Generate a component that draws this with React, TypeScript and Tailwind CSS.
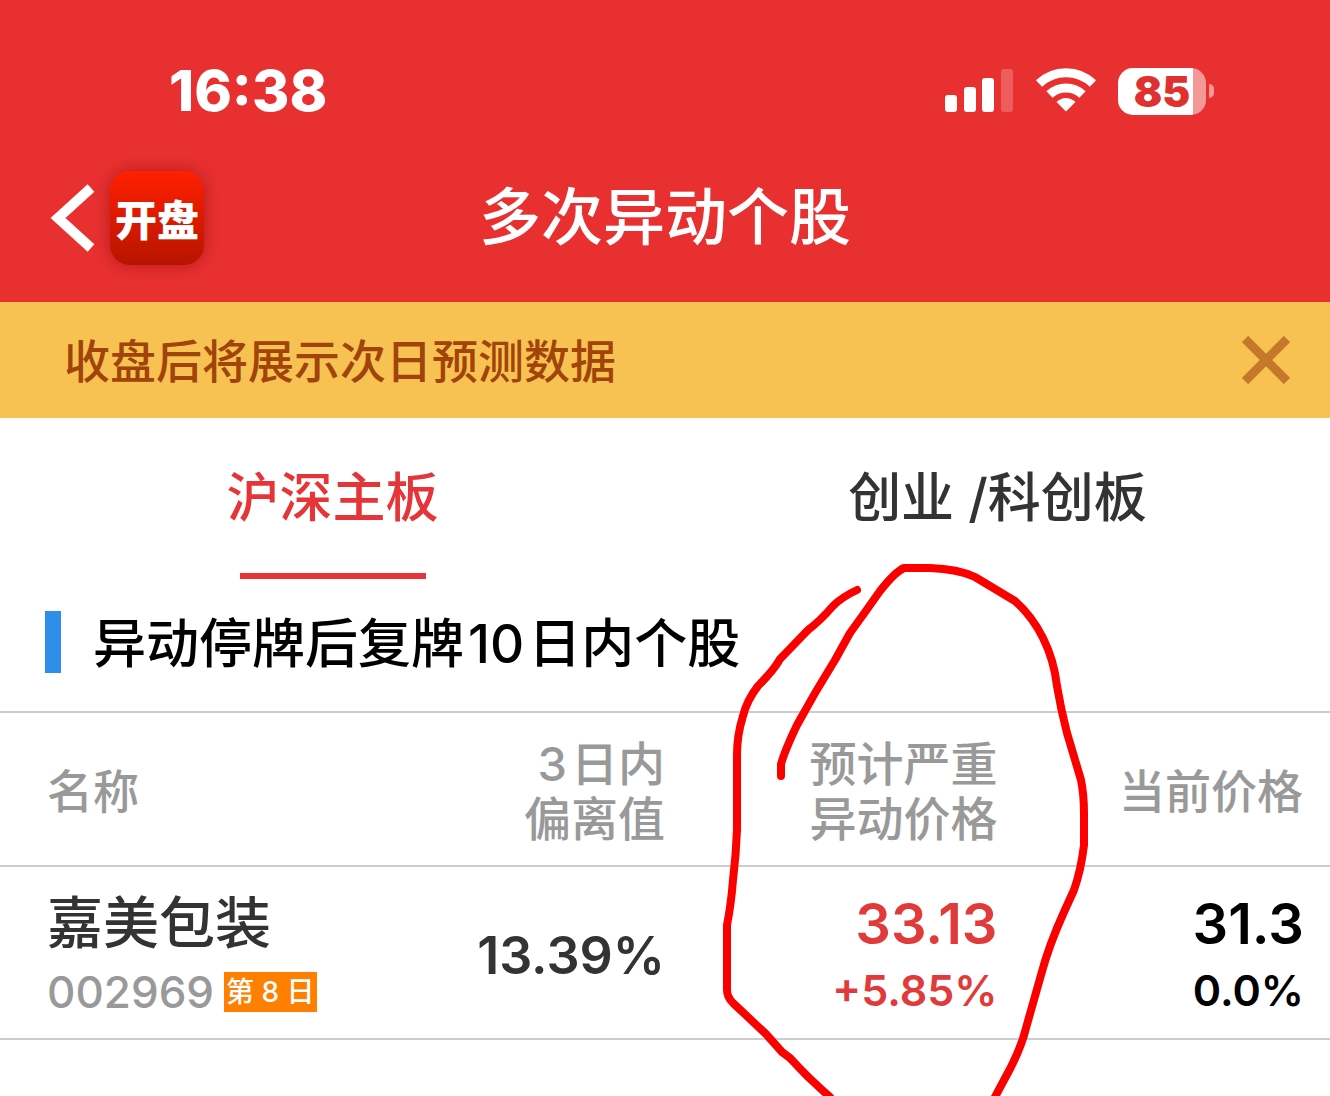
const tabs = [
  { href: '#main', label: '沪深主板', active: true },
  { href: '#growth', label: '创业 /科创板', active: false },
];

const stocks = [
  {
    name: '嘉美包装',
    code: '002969',
    day: '第 8 日',
    deviation: '13.39%',
    target: '33.13',
    targetPct: '+5.85%',
    price: '31.3',
    pricePct: '0.0%',
  },
];

const StatusBar = () => (
  <div className="flex items-center justify-between pt-[60px] pl-[169px] pr-[116px]">
    <span className="text-[57px] leading-[62px] font-extrabold">16:38</span>
    <div className="flex items-center gap-5">
      <svg width="70" height="46" viewBox="2 0 70 46" fill="currentColor" aria-hidden="true">
        <rect x="3" y="27" width="12" height="17" rx="3" />
        <rect x="22" y="19" width="12" height="25" rx="3" />
        <rect x="40" y="10" width="12" height="34" rx="3" />
        <rect x="59" y="1" width="12" height="43" rx="3" opacity="0.22" />
      </svg>
      <svg width="64" height="46" viewBox="1 0 64 46" fill="none" stroke="currentColor" aria-hidden="true">
        <path d="M6 15.5 A39 39 0 0 1 60 15.5" strokeWidth="9" />
        <path d="M16.5 26.5 A24 24 0 0 1 49.5 26.5" strokeWidth="9" />
        <path d="M33 43.5 L23.5 34 Q33 26 42.5 34 Z" fill="currentColor" stroke="none" />
      </svg>
      <div className="flex items-center gap-[3px]">
        <span className="flex h-[47px] w-[88px] items-center justify-center rounded-[15px] bg-linear-to-r from-white from-85% to-white/50 to-85% text-[42px] leading-[47px] font-black text-[#e03030]">
          85
        </span>
        <span className="h-[14px] w-[5px] rounded-r-full bg-white/50" />
      </div>
    </div>
  </div>
);

const TitleBar = () => (
  <div className="grid grid-cols-[1fr_auto_1fr] items-center px-[50px] pt-[49px]">
    <div className="flex items-center gap-[14px]">
      <button type="button" aria-label="返回">
        <svg width="46" height="68" viewBox="0 0 46 68" fill="none" stroke="currentColor" strokeWidth="10">
          <path d="M41 4 L8 34 L41 64" />
        </svg>
      </button>
      <span className="flex h-[94px] w-[94px] items-center justify-center rounded-[20px] bg-linear-to-b from-[#ff2000] to-[#b81400] pt-1 text-[42px] font-black shadow-[0_0_16px_rgba(120,0,0,0.45)]">
        开盘
      </span>
    </div>
    <h1 className="text-[62px] leading-[92px] font-medium">多次异动个股</h1>
  </div>
);

const Notice = () => (
  <div className="flex h-[116px] items-center justify-between bg-[#f7c252] pl-16 pr-10">
    <p className="pt-[2px] text-[46px] leading-[60px] font-medium text-[#a1440b]">收盘后将展示次日预测数据</p>
    <button type="button" aria-label="关闭" className="text-[#c5782a]">
      <svg width="48" height="48" viewBox="0 0 48 48" stroke="currentColor" strokeWidth="9">
        <path d="M3 3 L45 45 M45 3 L3 45" />
      </svg>
    </button>
  </div>
);

const Tabs = () => (
  <nav className="grid grid-cols-2 pt-[42px]">
    {tabs.map((tab) => (
      <a
        key={tab.href}
        href={tab.href}
        className={`flex flex-col items-center text-[53px] leading-[76px] font-medium ${
          tab.active ? 'text-[#e63538]' : 'text-[#333333]'
        }`}
      >
        {tab.label}
        {tab.active && <span className="mt-[37px] h-[6px] w-[186px] bg-[#e63538]" />}
      </a>
    ))}
  </nav>
);

const StockTable = () => (
  <table className="w-full table-fixed border-y-2 border-[#cccccc]">
    <thead>
      <tr className="h-[154px] border-b-2 border-[#cccccc] text-[46px] leading-[55px] text-[#999999]">
        <th className="pt-1 pl-[47px] text-left font-medium">名称</th>
        <th className="pt-1 text-right text-[47px] font-medium">
          <span className="mr-1">3</span>日内
          <br />
          偏离值
        </th>
        <th className="pt-1 text-right text-[47px] font-medium">
          预计严重
          <br />
          异动价格
        </th>
        <th className="pt-1 pr-[27px] text-right font-medium">当前价格</th>
      </tr>
    </thead>
    <tbody>
      {stocks.map((s) => (
        <tr key={s.code} className="h-[173px] font-semibold">
          <td className="pt-[6px] pl-[47px] text-left whitespace-nowrap">
            <div className="text-[56px] leading-[72px] font-medium text-[#333333]">{s.name}</div>
            <div className="flex items-center gap-[10px]">
              <span className="text-[44px] leading-[66px] font-medium text-[#999999]">{s.code}</span>
              <span className="bg-[#ff7f00] px-[2px] text-[28px] leading-[40px] font-medium text-white">{s.day}</span>
            </div>
          </td>
          <td className="pt-[6px] text-right text-[52px] text-[#333333]">{s.deviation}</td>
          <td className="pt-[8px] text-right text-[#e03a3a]">
            <div className="text-[56px] leading-[66px]">{s.target}</div>
            <div className="text-[43px] leading-[66px]">{s.targetPct}</div>
          </td>
          <td className="pt-[8px] pr-[26px] text-right text-black">
            <div className="text-[56px] leading-[66px]">{s.price}</div>
            <div className="text-[43px] leading-[66px]">{s.pricePct}</div>
          </td>
        </tr>
      ))}
    </tbody>
  </table>
);

// Hand-drawn red loop over the price column
const Marker = () => (
  <svg
    className="pointer-events-none absolute top-0 left-0 w-full"
    viewBox="0 0 1330 1096"
    fill="none"
    stroke="#fc0000"
    strokeWidth="8"
    strokeLinecap="round"
    strokeLinejoin="round"
    aria-hidden="true"
  >
    <path d="M857 590 Q842 597 833 606 Q820 621 808 630 L780 659 Q774 670 758 686 Q747 700 743 716 Q737 735 737 755 L737 830 Q736 855 733 880 Q731 905 727 925 L727 990 Q727 997 733 1003 L766 1034 L782 1052 L790 1058 Q808 1078 830 1097" />
    <path d="M781 776 L781 764 Q785 750 797 725 Q815 692 835 660 L850 633 Q866 611 880 591 Q895 572 904 568 L930 568 Q958 569 975 577 Q990 586 1015 601 Q1032 616 1043 638 Q1054 660 1057 686 Q1061 710 1067 733 L1081 780 Q1084 795 1084 813 L1084 845 Q1081 870 1074 890 L1064 912 Q1049 945 1041 975 L1026 1028 Q1022 1045 1011 1067 L995 1097" />
  </svg>
);

export default function App() {
  return (
    <div className="relative min-h-screen overflow-hidden bg-white font-[Inter,'Noto_Sans_CJK_SC',sans-serif]">
      <header className="h-[302px] bg-[#e83030] text-white">
        <StatusBar />
        <TitleBar />
      </header>
      <Notice />
      <Tabs />
      <main>
        <div className="flex items-center gap-8 pt-7 pb-[34px] pl-[45px]">
          <span className="h-[62px] w-4 bg-[#2f8eea]" />
          <h2 className="pt-1 text-[53px] leading-[66px] font-medium text-black">
            异动停牌后复牌<span className="mx-1">10</span>日内个股
          </h2>
        </div>
        <StockTable />
      </main>
      <Marker />
    </div>
  );
}
